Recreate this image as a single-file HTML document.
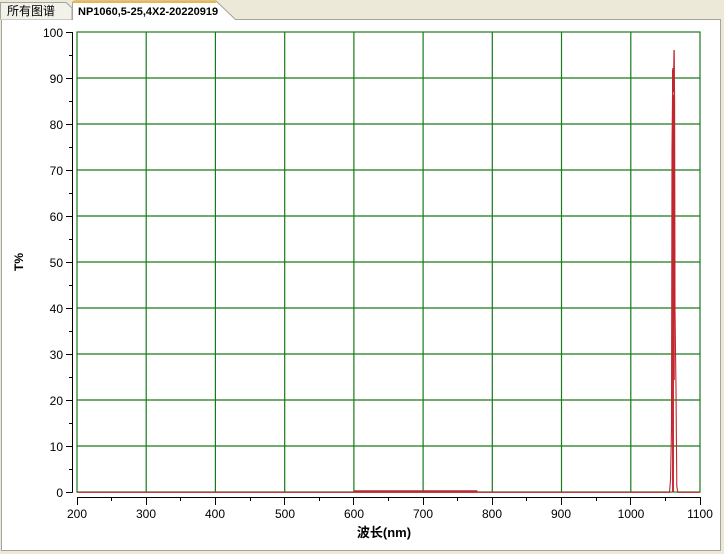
<!DOCTYPE html>
<html><head><meta charset="utf-8"><style>
html,body{margin:0;padding:0;width:724px;height:554px;overflow:hidden;background:#ece9d8;}
svg{display:block;}
</style></head><body>
<svg width="724" height="554" xmlns="http://www.w3.org/2000/svg" font-family="'Liberation Sans',Arial,sans-serif">
<rect x="0" y="0" width="724" height="554" fill="#ece9d8"/>
<rect x="1.5" y="19.5" width="719" height="531" fill="#fff" stroke="#a5a39a"/>
<!-- tabs -->
<path d="M0.5,19.5 V2.5 H66 L72,8 V19.5" fill="#f2f1ea" stroke="#a5a39a"/>
<text x="7" y="15" font-size="12" font-family="'Liberation Sans','Noto Sans CJK SC',sans-serif" fill="#000">所有图谱</text>
<path d="M72.5,20 V3.5 Q72.5,1 75,1 H216 L236,20" fill="#fff" stroke="#a5a39a"/>
<rect x="73" y="1" width="143" height="2" fill="#f4b53a"/>
<text x="78" y="15" font-size="11" font-weight="bold" fill="#000">NP1060,5-25,4X2-20220919</text>
<!-- grid -->
<g stroke="#1a7a1a" stroke-width="1.2" fill="none">
<rect x="77" y="32" width="623" height="460"/>
<path d="M146.2,32V492M215.4,32V492M284.7,32V492M353.9,32V492M423.1,32V492M492.3,32V492M561.5,32V492M630.8,32V492"/>
<path d="M77,78H700M77,124H700M77,170H700M77,216H700M77,262H700M77,308H700M77,354H700M77,400H700M77,446H700"/>
</g>
<!-- axes -->
<g stroke="#000" stroke-width="1" fill="none">
<path d="M72.5,32V492.5M66,32.5H72.5M66,78.5H72.5M66,124.5H72.5M66,170.5H72.5M66,216.5H72.5M66,262.5H72.5M66,308.5H72.5M66,354.5H72.5M66,400.5H72.5M66,446.5H72.5M66,492.5H72.5"/>
<path d="M69,55.5H72.5M69,101.5H72.5M69,147.5H72.5M69,193.5H72.5M69,239.5H72.5M69,285.5H72.5M69,331.5H72.5M69,377.5H72.5M69,423.5H72.5M69,469.5H72.5"/>
<path d="M77,497.5H700.5M77.5,497V505M146.5,497V505M215.5,497V505M284.5,497V505M353.5,497V505M423.5,497V505M492.5,497V505M561.5,497V505M630.5,497V505M700.5,497V505"/>
<path d="M111.5,497V501M180.5,497V501M250.5,497V501M319.5,497V501M388.5,497V501M457.5,497V501M526.5,497V501M596.5,497V501M665.5,497V501"/>
</g>
<g font-size="12" fill="#000" text-anchor="end">
<text x="63" y="37">100</text><text x="63" y="83">90</text><text x="63" y="129">80</text><text x="63" y="175">70</text><text x="63" y="221">60</text><text x="63" y="267">50</text><text x="63" y="313">40</text><text x="63" y="359">30</text><text x="63" y="405">20</text><text x="63" y="451">10</text><text x="63" y="497">0</text>
</g>
<g font-size="12" fill="#000" text-anchor="middle">
<text x="77" y="518">200</text><text x="146" y="518">300</text><text x="215" y="518">400</text><text x="285" y="518">500</text><text x="354" y="518">600</text><text x="423" y="518">700</text><text x="492" y="518">800</text><text x="561" y="518">900</text><text x="631" y="518">1000</text><text x="700" y="518">1100</text>
</g>
<text x="384" y="537" font-size="13" font-weight="bold" text-anchor="middle" font-family="'Liberation Sans','Noto Sans CJK SC',sans-serif">波长(nm)</text>
<text transform="translate(23,262) rotate(-90)" font-size="12" font-weight="bold" text-anchor="middle">T%</text>
<!-- data -->
<path d="M353.9,491.2H477.5" stroke="#b03030" stroke-width="2"/>
<g stroke="#c0262e" stroke-width="1.1" fill="none">
<path d="M77,492.3H669.5L670.5,480L671.5,428L672,150L672.8,68L673.4,92L674,50L674.6,100L675,310L676,390L676.8,486L677.8,492.3H700"/>
<path d="M672.6,70V492M673.4,95V492M674.2,50V380"/>
</g>
</svg>
</body></html>
